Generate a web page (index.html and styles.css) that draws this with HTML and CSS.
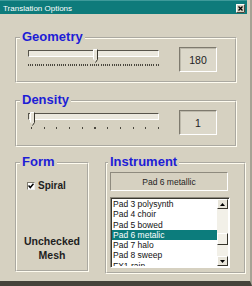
FILE: index.html
```html
<!DOCTYPE html>
<html lang="en">
<head>
  <meta charset="UTF-8">
  <title>Translation Options</title>
  <link rel="stylesheet" href="styles.css">
</head>
<body>
<div class="window">
  <div class="titlebar">
    <span class="title">Translation Options</span>
    <svg class="close" width="9" height="9" viewBox="0 0 9 9">
      <rect x="0" y="0" width="9" height="9" fill="#d6d1c1"/>
      <path d="M0.5 8.5 V0.5 H8.5" fill="none" stroke="#fff"/>
      <path d="M8.5 0.5 V8.5 H0.5" fill="none" stroke="#4a473e"/>
      <path d="M2.5 2.5 L6.5 6.5 M6.5 2.5 L2.5 6.5" stroke="#000" stroke-width="1.3"/>
    </svg>
  </div>

  <fieldset class="group geometry">
    <legend>Geometry</legend>
    <div class="row">
      <div class="slider">
        <div class="track"></div>
        <svg class="thumb" style="left: 65px" width="5" height="14" viewBox="0 0 5 14">
          <path d="M0.5 0.5 H4.5 V10.5 L2.5 13.5 L0.5 10.5 Z" fill="#e6e2d6"/>
          <path d="M0.5 10.5 V0.5 H4.5" fill="none" stroke="#fff"/>
          <path d="M4.5 0.5 V10.5 L2.5 13.5" fill="none" stroke="#36342c"/>
        </svg>
        <div class="ticks dense"></div>
      </div>
      <div class="value">180</div>
    </div>
  </fieldset>

  <fieldset class="group density">
    <legend>Density</legend>
    <div class="row">
      <div class="slider">
        <div class="track"></div>
        <svg class="thumb" style="left: 2px" width="5" height="14" viewBox="0 0 5 14">
          <path d="M0.5 0.5 H4.5 V10.5 L2.5 13.5 L0.5 10.5 Z" fill="#e6e2d6"/>
          <path d="M0.5 10.5 V0.5 H4.5" fill="none" stroke="#fff"/>
          <path d="M4.5 0.5 V10.5 L2.5 13.5" fill="none" stroke="#36342c"/>
        </svg>
        <div class="ticks sparse"></div>
      </div>
      <div class="value">1</div>
    </div>
  </fieldset>

  <div class="bottom">
    <fieldset class="group form">
      <legend>Form</legend>
      <div class="check">
        <span class="box">
          <svg width="6" height="6" viewBox="0 0 6 6"><path d="M0.5 2.5 L2.3 4.5 L5.5 0.8" fill="none" stroke="#000" stroke-width="1.5"/></svg>
        </span>
        <span>Spiral</span>
      </div>
      <div class="mesh">Unchecked<br>Mesh</div>
    </fieldset>

    <fieldset class="group instrument">
      <legend>Instrument</legend>
      <div class="display">Pad 6 metallic</div>
      <div class="listbox">
        <ul class="items">
          <li>Pad 3 polysynth</li>
          <li>Pad 4 choir</li>
          <li>Pad 5 bowed</li>
          <li class="selected">Pad 6 metalic</li>
          <li>Pad 7 halo</li>
          <li>Pad 8 sweep</li>
          <li>FX1 rain</li>
        </ul>
        <div class="scrollbar">
          <div class="btn"><svg width="5" height="3" viewBox="0 0 5 3"><path d="M0 3 L2.5 0 L5 3 Z" fill="#000"/></svg></div>
          <div class="knob"></div>
          <div class="btn down"><svg width="5" height="3" viewBox="0 0 5 3"><path d="M0 0 L2.5 3 L5 0 Z" fill="#000"/></svg></div>
        </div>
      </div>
    </fieldset>
  </div>
</div>
</body>
</html>
```

FILE: styles.css
```css
* {
  box-sizing: border-box;
  font-family: "Liberation Sans", Arial, sans-serif;
}
body {
  margin: 0;
  background: #d6d1c1;
}
.window {
  width: 252px;
  height: 286px;
  background: #d6d1c1;
  border-right: 2px solid #a6a294;
  border-bottom: 5px solid #45423a;
  overflow: hidden;
}

.titlebar {
  width: 247px;
  height: 14px;
  background: #0e7b7b;
  border-top: 1px solid #3d9a9a;
  display: flex;
  align-items: center;
  justify-content: space-between;
  padding: 1px 2px 0 3px;
}
.title {
  color: #fff;
  font-size: 8px;
  line-height: 9px;
}

/* groups */
.group {
  margin: 0;
  padding: 1px 0 0 0;
  border: 2px groove #fffcf0;
}
.group legend {
  color: #1d1dd6;
  font-weight: bold;
  font-size: 13px;
  line-height: 13px;
  padding: 0 2px 3px 2px;
  margin-left: 3px;
}
.geometry, .density {
  width: 222px;
  margin-left: 15px;
}
.geometry {
  margin-top: 16px;
  padding-bottom: 9px;
}
.density {
  margin-top: 10px;
  padding-bottom: 10px;
}

.row {
  display: flex;
  align-items: flex-start;
  padding-left: 11px;
}
.slider {
  position: relative;
  width: 131px;
  margin-top: 3px;
  margin-right: 20px;
}
.track {
  height: 7px;
  background: #ebe8de;
  border: 1px solid;
  border-color: #57544b #fff #fff #57544b;
}
.thumb {
  position: absolute;
  top: -1px;
}
.ticks {
  height: 2px;
  margin-top: 7px;
}
.dense {
  background: repeating-linear-gradient(90deg, #4a473e 0 1px, transparent 1px 2.2px);
}
.sparse {
  margin-left: 3px;
  width: 128px;
  background: repeating-linear-gradient(90deg, #4a473e 0 1px, transparent 1px 12.7px);
}
.value {
  width: 38px;
  height: 25px;
  background: #dcd8ca;
  border: 1px solid;
  border-color: #7e7a6e #fff #fff #7e7a6e;
  box-shadow: inset 1px 1px 0 #bdb9ab;
  font-size: 10.5px;
  color: #1e1e1e;
  display: flex;
  align-items: center;
  justify-content: center;
}

/* form + instrument */
.bottom {
  display: flex;
  gap: 16px;
  margin: 8px 0 0 15px;
}
.form {
  width: 74px;
  height: 117px;
}
.instrument {
  width: 141px;
  height: 119px;
  padding-left: 3px;
}
.instrument legend {
  margin-left: -2px;
}
.check {
  display: flex;
  align-items: flex-start;
  gap: 3px;
  margin: 10px 0 0 10px;
  font-size: 10px;
  line-height: 8px;
  font-weight: bold;
  color: #1e1e1e;
}
.box {
  width: 8px;
  height: 8px;
  background: #fff;
  border: 1px solid;
  border-color: #7e7a6e #eee #eee #7e7a6e;
  display: flex;
  align-items: center;
  justify-content: center;
}
.mesh {
  margin-top: 45px;
  text-align: center;
  font-size: 10.5px;
  line-height: 13.5px;
  font-weight: bold;
  color: #1e1e1e;
}

.display {
  width: 118px;
  height: 19px;
  border: 1px solid;
  border-color: #8e8a7e #fff #fff #8e8a7e;
  font-size: 8.5px;
  color: #222;
  display: flex;
  align-items: center;
  justify-content: center;
}
.listbox {
  width: 120px;
  height: 71px;
  margin-top: 6px;
  background: #fff;
  border: 1px solid;
  border-color: #8e8a7e #fff #fff #8e8a7e;
  box-shadow: inset 1px 1px 0 #3a3830;
  padding: 1px 1px 1px 1px;
  display: flex;
  overflow: hidden;
}
.items {
  list-style: none;
  margin: 0;
  padding: 0;
  flex: 1;
  overflow: hidden;
}
.items li {
  font-size: 8.5px;
  line-height: 10.3px;
  height: 10.3px;
  color: #111;
  white-space: nowrap;
  padding-left: 1px;
}
.items li.selected {
  background: #0c7c7c;
  color: #fff;
}
.scrollbar {
  width: 11px;
  background: #f2f0e8;
  display: flex;
  flex-direction: column;
}
.btn, .knob {
  height: 10px;
  background: #e8e5da;
  border: 1px solid;
  border-color: #fff #36342c #36342c #fff;
  display: flex;
  align-items: center;
  justify-content: center;
}
.knob {
  height: 12px;
  margin-top: 24px;
  background: #f2f0e8;
}
.down {
  margin-top: auto;
}
```
